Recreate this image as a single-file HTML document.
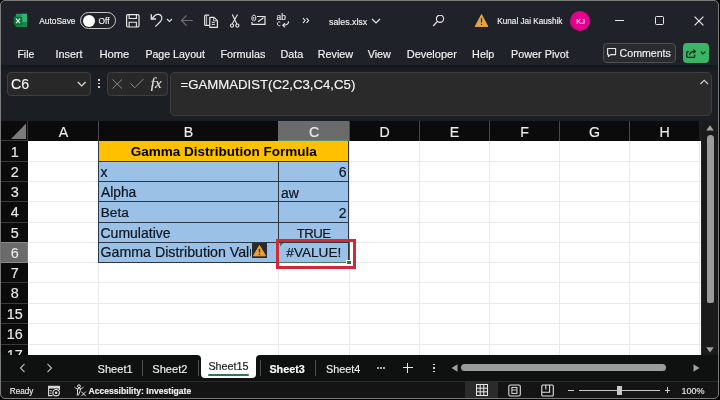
<!DOCTYPE html><html><head><meta charset="utf-8"><style>html,body{margin:0;padding:0;width:720px;height:400px;overflow:hidden;background:#000}</style></head><body><div style="position:absolute;left:0;top:0;width:720px;height:400px;will-change:transform"><div style="position:absolute;left:0px;top:0px;width:720px;height:400px;background:#000"></div>
<div style="position:absolute;left:0px;top:0px;width:719px;height:399px;background:#1f2229"></div>
<div style="position:absolute;left:1px;top:65px;width:717px;height:56px;background:#1b1e22"></div>
<div style="position:absolute;left:1px;top:65px;width:717px;height:6px;background:linear-gradient(#14171c,#1b1e21)"></div>
<svg style="position:absolute;left:13px;top:13px;" width="15" height="15" viewBox="0 0 15 15">
<rect x="2.75" y="0.75" width="11.25" height="13.25" rx="1" fill="#1d9a5c"/>
<rect x="8.8" y="0.75" width="5.2" height="13.25" fill="#2fb474"/>
<rect x="2.75" y="9" width="11.25" height="5" fill="#137a45" opacity="0.8"/>
<rect x="0.75" y="3.75" width="8.5" height="8.25" rx="0.8" fill="#0f7038"/>
<path d="M3 5.7 L7 10.1 M7 5.7 L3 10.1" stroke="#e8f5ec" stroke-width="1.1"/>
</svg>
<div style="position:absolute;left:39.2px;top:16.89px;line-height:8.4px;font-size:8.4px;font-family:'Liberation Sans', sans-serif;font-weight:400;color:#f0f0f0;white-space:pre;-webkit-text-stroke-width:0.15px;">AutoSave</div>
<div style="position:absolute;left:80.3px;top:12.2px;width:36px;height:17px;border:1.2px solid #c8c8c8;border-radius:9px;box-sizing:border-box"></div>
<div style="position:absolute;left:83px;top:14.6px;width:12px;height:12px;background:#fff;border-radius:50%"></div>
<div style="position:absolute;left:98.6px;top:16.97px;line-height:8.3px;font-size:8.3px;font-family:'Liberation Sans', sans-serif;font-weight:400;color:#f0f0f0;white-space:pre;-webkit-text-stroke-width:0.15px;">Off</div>
<svg style="position:absolute;left:125px;top:13px;" width="16" height="16" viewBox="0 0 16 16">
<rect x="1.6" y="1.6" width="12.4" height="12.4" rx="1.2" fill="none" stroke="#e8e8e8" stroke-width="1.2"/>
<path d="M4.1 1.6 V5.5 H11.4 V1.6" fill="none" stroke="#e8e8e8" stroke-width="1.1"/>
<path d="M4.1 14 V9.2 H11.4 V14" fill="none" stroke="#e8e8e8" stroke-width="1.1"/>
</svg>
<svg style="position:absolute;left:148px;top:12px;" width="16" height="17" viewBox="0 0 16 17">
<path d="M3.3 2.3 V7 H8" fill="none" stroke="#e8e8e8" stroke-width="1.3"/>
<path d="M3.5 7 L7 3.5 C9 1.8 12.5 2 13.7 4.8 C14.5 7 13.5 8.5 12.5 9.5 L7.3 14.7" fill="none" stroke="#e8e8e8" stroke-width="1.2"/>
</svg>
<svg style="position:absolute;left:166px;top:18px;" width="7" height="5" viewBox="0 0 7 5"><path d="M1 1 L3.5 3.5 L6 1" fill="none" stroke="#e0e0e0" stroke-width="1.1"/></svg>
<svg style="position:absolute;left:180px;top:14px;" width="14" height="13" viewBox="0 0 14 13"><path d="M13 6.5 H1.5 M6.5 1.5 L1.5 6.5 L6.5 11.5" fill="none" stroke="#6e6e6e" stroke-width="1.2"/></svg>
<svg style="position:absolute;left:203px;top:14px;" width="16" height="14" viewBox="0 0 16 14">
<path d="M6.2 1.2 H2.6 Q1.7 1.2 1.7 2.1 V10.4 Q1.7 11.3 2.6 11.3 H6.2" fill="none" stroke="#e8e8e8" stroke-width="1.2"/>
<path d="M3.6 1.8 V10.8" stroke="#e8e8e8" stroke-width="0.8"/>
<path d="M6.8 3.4 H11 L14.4 6.6 V13.3 H6.8 Z" fill="#202228" stroke="#e8e8e8" stroke-width="1.2" stroke-linejoin="round"/>
<path d="M10.6 3.6 V6.8 H14" fill="none" stroke="#e8e8e8" stroke-width="0.8"/>
<path d="M8.8 8.3 H11.8 M8.8 10.4 H11.8" stroke="#e8e8e8" stroke-width="1"/>
</svg>
<svg style="position:absolute;left:229px;top:14px;" width="11" height="14" viewBox="0 0 11 14">
<path d="M3.3 0.4 L7.8 10 M8.5 0.4 L3.2 10" fill="none" stroke="#e8e8e8" stroke-width="1.1"/>
<circle cx="3" cy="11.6" r="1.6" fill="none" stroke="#e8e8e8" stroke-width="1.1"/>
<circle cx="8.4" cy="11.6" r="1.6" fill="none" stroke="#e8e8e8" stroke-width="1.1"/>
</svg>
<svg style="position:absolute;left:250px;top:14px;" width="16" height="12" viewBox="0 0 16 12">
<path d="M2 8 V10.4 H15 V2.5 H7" fill="none" stroke="#e8e8e8" stroke-width="1.2"/>
<path d="M8 7.8 L13.5 3.8" fill="none" stroke="#e8e8e8" stroke-width="1.1"/>
<path d="M3.2 7 C1.8 6.5 1.6 4.5 2.2 2.5 C2.8 0.6 5.2 0.6 5.6 2.5 C6 4.5 5.6 6.8 4.6 6.8 C3.6 6.8 3.6 5 3.8 3" fill="none" stroke="#e8e8e8" stroke-width="1"/>
</svg>
<div style="position:absolute;left:276.6px;top:13.19px;line-height:8.4px;font-size:8.4px;font-family:'Liberation Sans', sans-serif;font-weight:400;color:#e8e8e8;white-space:pre;-webkit-text-stroke-width:0.15px;">ab</div>
<svg style="position:absolute;left:276px;top:20px;" width="15" height="9" viewBox="0 0 15 9">
<path d="M4.3 2.2 C3 1.4 1.4 2 1.4 3.8 C1.4 5.6 3 6.2 4.3 5.4" fill="none" stroke="#e8e8e8" stroke-width="1"/>
<path d="M12.5 1.2 C12.8 3.5 11 5.3 7 5.3 M9 3.2 L6.8 5.3 L9 7.4" fill="none" stroke="#e8e8e8" stroke-width="1.1"/>
</svg>
<svg style="position:absolute;left:302px;top:17px;" width="8" height="7" viewBox="0 0 8 7"><path d="M1 1 L3 3.5 L1 6 M4.5 1 L6.5 3.5 L4.5 6" fill="none" stroke="#e8e8e8" stroke-width="1.2"/></svg>
<div style="position:absolute;left:329px;top:18.15px;line-height:8.8px;font-size:8.8px;font-family:'Liberation Sans', sans-serif;font-weight:400;color:#f0f0f0;white-space:pre;-webkit-text-stroke-width:0.15px;">sales.xlsx</div>
<svg style="position:absolute;left:371px;top:18px;" width="10" height="6" viewBox="0 0 10 6"><path d="M1 1 L5 5 L9 1" fill="none" stroke="#e8e8e8" stroke-width="1.2"/></svg>
<svg style="position:absolute;left:432px;top:15px;" width="14" height="14" viewBox="0 0 14 14">
<circle cx="8" cy="3.8" r="3.6" fill="none" stroke="#e8e8e8" stroke-width="1.1"/>
<path d="M5.4 6.4 L1.2 11" stroke="#e8e8e8" stroke-width="1.2"/>
</svg>
<svg style="position:absolute;left:474px;top:13px;" width="16" height="15" viewBox="0 0 16 15">
<path d="M7.5 1.6 L13.8 13.4 H1.2 Z" fill="#e3a548" stroke="#e3a548" stroke-width="1" stroke-linejoin="round"/>
<path d="M7.5 5.2 V9.6" stroke="#2a2016" stroke-width="1.2"/>
<circle cx="7.5" cy="11.4" r="0.7" fill="#2a2016"/>
</svg>
<div style="position:absolute;left:497.3px;top:18.26px;line-height:8.2px;font-size:8.2px;font-family:'Liberation Sans', sans-serif;font-weight:400;color:#f0f0f0;white-space:pre;-webkit-text-stroke-width:0.15px;">Kunal Jai Kaushik</div>
<div style="position:absolute;left:570px;top:10.7px;width:20px;height:20px;background:#e3008c;border-radius:50%"></div>
<div style="position:absolute;left:380.6px;width:400px;text-align:center;top:18.34px;line-height:7.4px;font-size:7.4px;font-family:'Liberation Sans', sans-serif;font-weight:400;color:#fbd9f0;white-space:pre;-webkit-text-stroke-width:0.15px;">KJ</div>
<div style="position:absolute;left:615.3px;top:20px;width:9px;height:1.2px;background:#e8e8e8"></div>
<div style="position:absolute;left:654.7px;top:16.3px;width:9px;height:8.7px;border:1.2px solid #e8e8e8;border-radius:1.5px;box-sizing:border-box"></div>
<svg style="position:absolute;left:694px;top:16px;" width="10" height="10" viewBox="0 0 10 10"><path d="M0.6 0.6 L9.4 9.4 M9.4 0.6 L0.6 9.4" stroke="#e8e8e8" stroke-width="1.2"/></svg>
<div style="position:absolute;left:17.5px;top:49.60px;line-height:10.4px;font-size:10.4px;font-family:'Liberation Sans', sans-serif;font-weight:400;color:#f4f4f4;white-space:pre;-webkit-text-stroke:0.15px #f4f4f4;">File</div>
<div style="position:absolute;left:55.6px;top:49.26px;line-height:10.8px;font-size:10.8px;font-family:'Liberation Sans', sans-serif;font-weight:400;color:#f4f4f4;white-space:pre;-webkit-text-stroke:0.15px #f4f4f4;">Insert</div>
<div style="position:absolute;left:99.4px;top:48.92px;line-height:11.2px;font-size:11.2px;font-family:'Liberation Sans', sans-serif;font-weight:400;color:#f4f4f4;white-space:pre;-webkit-text-stroke:0.15px #f4f4f4;">Home</div>
<div style="position:absolute;left:145.4px;top:49.43px;line-height:10.6px;font-size:10.6px;font-family:'Liberation Sans', sans-serif;font-weight:400;color:#f4f4f4;white-space:pre;-webkit-text-stroke:0.15px #f4f4f4;">Page Layout</div>
<div style="position:absolute;left:220.4px;top:49.26px;line-height:10.8px;font-size:10.8px;font-family:'Liberation Sans', sans-serif;font-weight:400;color:#f4f4f4;white-space:pre;-webkit-text-stroke:0.15px #f4f4f4;">Formulas</div>
<div style="position:absolute;left:280.4px;top:49.26px;line-height:10.8px;font-size:10.8px;font-family:'Liberation Sans', sans-serif;font-weight:400;color:#f4f4f4;white-space:pre;-webkit-text-stroke:0.15px #f4f4f4;">Data</div>
<div style="position:absolute;left:317.7px;top:49.26px;line-height:10.8px;font-size:10.8px;font-family:'Liberation Sans', sans-serif;font-weight:400;color:#f4f4f4;white-space:pre;-webkit-text-stroke:0.15px #f4f4f4;">Review</div>
<div style="position:absolute;left:367.7px;top:49.26px;line-height:10.8px;font-size:10.8px;font-family:'Liberation Sans', sans-serif;font-weight:400;color:#f4f4f4;white-space:pre;-webkit-text-stroke:0.15px #f4f4f4;">View</div>
<div style="position:absolute;left:406.7px;top:49.09px;line-height:11.0px;font-size:11.0px;font-family:'Liberation Sans', sans-serif;font-weight:400;color:#f4f4f4;white-space:pre;-webkit-text-stroke:0.15px #f4f4f4;">Developer</div>
<div style="position:absolute;left:472.1px;top:49.26px;line-height:10.8px;font-size:10.8px;font-family:'Liberation Sans', sans-serif;font-weight:400;color:#f4f4f4;white-space:pre;-webkit-text-stroke:0.15px #f4f4f4;">Help</div>
<div style="position:absolute;left:511.1px;top:49.26px;line-height:10.8px;font-size:10.8px;font-family:'Liberation Sans', sans-serif;font-weight:400;color:#f4f4f4;white-space:pre;-webkit-text-stroke:0.15px #f4f4f4;">Power Pivot</div>
<div style="position:absolute;left:603.3px;top:42.7px;width:72.5px;height:20px;border:1px solid #505050;background:#2a2b2e;border-radius:4px;box-sizing:border-box"></div>
<svg style="position:absolute;left:606px;top:47px;" width="11" height="11" viewBox="0 0 11 11"><path d="M1.6 1.5 H9.6 V7.6 H4.6 L2.4 9.6 V7.6 H1.6 Z" fill="none" stroke="#e8e8e8" stroke-width="1.1" stroke-linejoin="round"/></svg>
<div style="position:absolute;left:619.6px;top:47.83px;line-height:10.6px;font-size:10.6px;font-family:'Liberation Sans', sans-serif;font-weight:400;color:#f2f2f2;white-space:pre;-webkit-text-stroke-width:0.15px;">Comments</div>
<div style="position:absolute;left:682.8px;top:43px;width:26px;height:19.7px;background:#3bb466;border-radius:4px"></div>
<svg style="position:absolute;left:685px;top:47px;" width="12" height="12" viewBox="0 0 12 12">
<path d="M4 4.6 H2.8 Q1.8 4.6 1.8 5.6 V9.6 Q1.8 10.4 2.6 10.4 H8.9 Q9.7 10.4 9.7 9.6 V7.4" fill="none" stroke="#0f2a18" stroke-width="1.2"/>
<path d="M4.4 8.2 C4.8 5.8 6.6 4.4 9.6 4.4 M8.2 2.5 L10.4 4.4 L8.2 6.3" fill="none" stroke="#0f2a18" stroke-width="1.2" stroke-linejoin="round"/>
</svg>
<svg style="position:absolute;left:700px;top:51px;" width="6" height="4" viewBox="0 0 6 4"><path d="M0.7 0.7 L3 3 L5.3 0.7" fill="none" stroke="#0f2a18" stroke-width="1.2"/></svg>
<div style="position:absolute;left:7px;top:72px;width:84px;height:24px;border:1px solid #3f3f42;background:#282828;border-radius:4px;box-sizing:border-box"></div>
<div style="position:absolute;left:11px;top:76.68px;line-height:14.2px;font-size:14.2px;font-family:'Liberation Sans', sans-serif;font-weight:400;color:#f5f5f5;white-space:pre;-webkit-text-stroke-width:0.15px;">C6</div>
<svg style="position:absolute;left:77px;top:81px;" width="10" height="7" viewBox="0 0 10 7"><path d="M0.8 1 L4.7 5 L8.6 1" fill="none" stroke="#dcdcdc" stroke-width="1.2"/></svg>
<div style="position:absolute;left:98px;top:79.0px;width:1.8px;height:1.8px;background:#d8d8d8"></div>
<div style="position:absolute;left:98px;top:82.5px;width:1.8px;height:1.8px;background:#d8d8d8"></div>
<div style="position:absolute;left:98px;top:86.0px;width:1.8px;height:1.8px;background:#d8d8d8"></div>
<div style="position:absolute;left:107px;top:72px;width:60.5px;height:24px;border:1px solid #3f3f42;background:#282828;border-radius:4px;box-sizing:border-box"></div>
<svg style="position:absolute;left:112px;top:79px;" width="11" height="10" viewBox="0 0 11 10"><path d="M0.5 0.5 L10 9.5 M10 0.5 L0.5 9.5" stroke="#8c8c8c" stroke-width="1"/></svg>
<svg style="position:absolute;left:130px;top:78px;" width="14" height="11" viewBox="0 0 14 11"><path d="M0.5 5.5 L4.8 9.8 L13.5 1" fill="none" stroke="#8c8c8c" stroke-width="1"/></svg>
<div style="position:absolute;left:150.8px;top:75.90px;line-height:15px;font-size:15px;font-family:'Liberation Serif', serif;font-weight:400;color:#e0e0e0;white-space:pre;-webkit-text-stroke-width:0.15px;font-style:italic;">fx</div>
<div style="position:absolute;left:170px;top:72px;width:541.5px;height:44px;border:1px solid #3f3f42;background:#2a2a2a;border-radius:5px;box-sizing:border-box"></div>
<div style="position:absolute;left:180.5px;top:78.23px;line-height:13.2px;font-size:13.2px;font-family:'Liberation Sans', sans-serif;font-weight:400;color:#f5f5f5;white-space:pre;-webkit-text-stroke-width:0.15px;">=GAMMADIST(C2,C3,C4,C5)</div>
<svg style="position:absolute;left:699px;top:79px;" width="11" height="7" viewBox="0 0 11 7"><path d="M1.4 5 L5.2 1.3 L9 5" fill="none" stroke="#d0d0d0" stroke-width="1.1"/></svg>
<div style="position:absolute;left:1px;top:121px;width:701px;height:20px;background:#0b0b0b"></div>
<div style="position:absolute;left:1px;top:141px;width:27px;height:214px;background:#0b0b0b"></div>
<div style="position:absolute;left:28px;top:141px;width:673px;height:214px;background:#fff"></div>
<svg style="position:absolute;left:10px;top:122px;" width="18" height="18" viewBox="0 0 18 18"><path d="M16 1.5 V17 H1 Z" fill="#7a7a7a"/></svg>
<div style="position:absolute;left:1px;top:140px;width:27px;height:1px;background:#3a3a3a"></div>
<div style="position:absolute;left:27px;top:121px;width:1px;height:20px;background:#3a3a3a"></div>
<div style="position:absolute;left:98px;top:121px;width:1px;height:20px;background:#4a4a4a"></div>
<div style="position:absolute;left:-136.5px;width:400px;text-align:center;top:124.98px;line-height:14.2px;font-size:14.2px;font-family:'Liberation Sans', sans-serif;font-weight:400;color:#ececec;white-space:pre;-webkit-text-stroke-width:0.15px;">A</div>
<div style="position:absolute;left:278px;top:121px;width:1px;height:20px;background:#4a4a4a"></div>
<div style="position:absolute;left:-11.5px;width:400px;text-align:center;top:124.98px;line-height:14.2px;font-size:14.2px;font-family:'Liberation Sans', sans-serif;font-weight:400;color:#ececec;white-space:pre;-webkit-text-stroke-width:0.15px;">B</div>
<div style="position:absolute;left:278px;top:121px;width:71px;height:20px;background:#6b6b6b"></div>
<div style="position:absolute;left:278px;top:140px;width:71px;height:1px;background:#5e8f66"></div>
<div style="position:absolute;left:349px;top:121px;width:1px;height:20px;background:#4a4a4a"></div>
<div style="position:absolute;left:114.0px;width:400px;text-align:center;top:124.98px;line-height:14.2px;font-size:14.2px;font-family:'Liberation Sans', sans-serif;font-weight:400;color:#ececec;white-space:pre;-webkit-text-stroke-width:0.15px;">C</div>
<div style="position:absolute;left:419px;top:121px;width:1px;height:20px;background:#4a4a4a"></div>
<div style="position:absolute;left:184.5px;width:400px;text-align:center;top:124.98px;line-height:14.2px;font-size:14.2px;font-family:'Liberation Sans', sans-serif;font-weight:400;color:#ececec;white-space:pre;-webkit-text-stroke-width:0.15px;">D</div>
<div style="position:absolute;left:489px;top:121px;width:1px;height:20px;background:#4a4a4a"></div>
<div style="position:absolute;left:254.5px;width:400px;text-align:center;top:124.98px;line-height:14.2px;font-size:14.2px;font-family:'Liberation Sans', sans-serif;font-weight:400;color:#ececec;white-space:pre;-webkit-text-stroke-width:0.15px;">E</div>
<div style="position:absolute;left:559px;top:121px;width:1px;height:20px;background:#4a4a4a"></div>
<div style="position:absolute;left:324.5px;width:400px;text-align:center;top:124.98px;line-height:14.2px;font-size:14.2px;font-family:'Liberation Sans', sans-serif;font-weight:400;color:#ececec;white-space:pre;-webkit-text-stroke-width:0.15px;">F</div>
<div style="position:absolute;left:629px;top:121px;width:1px;height:20px;background:#4a4a4a"></div>
<div style="position:absolute;left:394.5px;width:400px;text-align:center;top:124.98px;line-height:14.2px;font-size:14.2px;font-family:'Liberation Sans', sans-serif;font-weight:400;color:#ececec;white-space:pre;-webkit-text-stroke-width:0.15px;">G</div>
<div style="position:absolute;left:699px;top:121px;width:1px;height:20px;background:#4a4a4a"></div>
<div style="position:absolute;left:464.5px;width:400px;text-align:center;top:124.98px;line-height:14.2px;font-size:14.2px;font-family:'Liberation Sans', sans-serif;font-weight:400;color:#ececec;white-space:pre;-webkit-text-stroke-width:0.15px;">H</div>
<div style="position:absolute;left:98px;top:141px;width:1px;height:214px;background:#e9e9e9"></div>
<div style="position:absolute;left:278px;top:141px;width:1px;height:214px;background:#e9e9e9"></div>
<div style="position:absolute;left:349px;top:141px;width:1px;height:214px;background:#e9e9e9"></div>
<div style="position:absolute;left:419px;top:141px;width:1px;height:214px;background:#e9e9e9"></div>
<div style="position:absolute;left:489px;top:141px;width:1px;height:214px;background:#e9e9e9"></div>
<div style="position:absolute;left:559px;top:141px;width:1px;height:214px;background:#e9e9e9"></div>
<div style="position:absolute;left:629px;top:141px;width:1px;height:214px;background:#e9e9e9"></div>
<div style="position:absolute;left:699px;top:141px;width:1px;height:214px;background:#e9e9e9"></div>
<div style="position:absolute;left:1px;top:161px;width:27px;height:1px;background:#3a3a3a"></div>
<div style="position:absolute;left:28px;top:161px;width:673px;height:1px;background:#e9e9e9"></div>
<div style="position:absolute;left:-185.2px;width:400px;text-align:center;top:145.41px;line-height:14.4px;font-size:14.4px;font-family:'Liberation Sans', sans-serif;font-weight:400;color:#e8e8e8;white-space:pre;-webkit-text-stroke-width:0.15px;">1</div>
<div style="position:absolute;left:1px;top:181px;width:27px;height:1px;background:#3a3a3a"></div>
<div style="position:absolute;left:28px;top:181px;width:673px;height:1px;background:#e9e9e9"></div>
<div style="position:absolute;left:-185.2px;width:400px;text-align:center;top:165.41px;line-height:14.4px;font-size:14.4px;font-family:'Liberation Sans', sans-serif;font-weight:400;color:#e8e8e8;white-space:pre;-webkit-text-stroke-width:0.15px;">2</div>
<div style="position:absolute;left:1px;top:201px;width:27px;height:1px;background:#3a3a3a"></div>
<div style="position:absolute;left:28px;top:201px;width:673px;height:1px;background:#e9e9e9"></div>
<div style="position:absolute;left:-185.2px;width:400px;text-align:center;top:185.41px;line-height:14.4px;font-size:14.4px;font-family:'Liberation Sans', sans-serif;font-weight:400;color:#e8e8e8;white-space:pre;-webkit-text-stroke-width:0.15px;">3</div>
<div style="position:absolute;left:1px;top:222px;width:27px;height:1px;background:#3a3a3a"></div>
<div style="position:absolute;left:28px;top:222px;width:673px;height:1px;background:#e9e9e9"></div>
<div style="position:absolute;left:-185.2px;width:400px;text-align:center;top:205.41px;line-height:14.4px;font-size:14.4px;font-family:'Liberation Sans', sans-serif;font-weight:400;color:#e8e8e8;white-space:pre;-webkit-text-stroke-width:0.15px;">4</div>
<div style="position:absolute;left:1px;top:242px;width:27px;height:1px;background:#3a3a3a"></div>
<div style="position:absolute;left:28px;top:242px;width:673px;height:1px;background:#e9e9e9"></div>
<div style="position:absolute;left:-185.2px;width:400px;text-align:center;top:226.41px;line-height:14.4px;font-size:14.4px;font-family:'Liberation Sans', sans-serif;font-weight:400;color:#e8e8e8;white-space:pre;-webkit-text-stroke-width:0.15px;">5</div>
<div style="position:absolute;left:1px;top:262px;width:27px;height:1px;background:#3a3a3a"></div>
<div style="position:absolute;left:28px;top:262px;width:673px;height:1px;background:#e9e9e9"></div>
<div style="position:absolute;left:1px;top:242px;width:27px;height:21px;background:#6b6b6b"></div>
<div style="position:absolute;left:1px;top:242px;width:27px;height:1px;background:#8a8a8a"></div>
<div style="position:absolute;left:1px;top:262px;width:27px;height:1px;background:#8a8a8a"></div>
<div style="position:absolute;left:27px;top:242px;width:1px;height:21px;background:#5e8f66"></div>
<div style="position:absolute;left:-185.2px;width:400px;text-align:center;top:246.41px;line-height:14.4px;font-size:14.4px;font-family:'Liberation Sans', sans-serif;font-weight:400;color:#e8e8e8;white-space:pre;-webkit-text-stroke-width:0.15px;">6</div>
<div style="position:absolute;left:1px;top:282px;width:27px;height:1px;background:#3a3a3a"></div>
<div style="position:absolute;left:28px;top:282px;width:673px;height:1px;background:#e9e9e9"></div>
<div style="position:absolute;left:-185.2px;width:400px;text-align:center;top:266.41px;line-height:14.4px;font-size:14.4px;font-family:'Liberation Sans', sans-serif;font-weight:400;color:#e8e8e8;white-space:pre;-webkit-text-stroke-width:0.15px;">7</div>
<div style="position:absolute;left:1px;top:303px;width:27px;height:1px;background:#3a3a3a"></div>
<div style="position:absolute;left:28px;top:303px;width:673px;height:1px;background:#e9e9e9"></div>
<div style="position:absolute;left:-185.2px;width:400px;text-align:center;top:286.41px;line-height:14.4px;font-size:14.4px;font-family:'Liberation Sans', sans-serif;font-weight:400;color:#e8e8e8;white-space:pre;-webkit-text-stroke-width:0.15px;">8</div>
<div style="position:absolute;left:1px;top:323px;width:27px;height:1px;background:#3a3a3a"></div>
<div style="position:absolute;left:28px;top:323px;width:673px;height:1px;background:#e9e9e9"></div>
<div style="position:absolute;left:-185.2px;width:400px;text-align:center;top:307.41px;line-height:14.4px;font-size:14.4px;font-family:'Liberation Sans', sans-serif;font-weight:400;color:#e8e8e8;white-space:pre;-webkit-text-stroke-width:0.15px;">15</div>
<div style="position:absolute;left:1px;top:344px;width:27px;height:1px;background:#3a3a3a"></div>
<div style="position:absolute;left:28px;top:344px;width:673px;height:1px;background:#e9e9e9"></div>
<div style="position:absolute;left:-185.2px;width:400px;text-align:center;top:327.41px;line-height:14.4px;font-size:14.4px;font-family:'Liberation Sans', sans-serif;font-weight:400;color:#e8e8e8;white-space:pre;-webkit-text-stroke-width:0.15px;">16</div>
<div style="position:absolute;left:1px;top:364px;width:27px;height:1px;background:#3a3a3a"></div>
<div style="position:absolute;left:28px;top:364px;width:673px;height:1px;background:#e9e9e9"></div>
<div style="position:absolute;left:-185.2px;width:400px;text-align:center;top:348.41px;line-height:14.4px;font-size:14.4px;font-family:'Liberation Sans', sans-serif;font-weight:400;color:#e8e8e8;white-space:pre;-webkit-text-stroke-width:0.15px;">17</div>
<div style="position:absolute;left:98px;top:141px;width:251px;height:21px;background:#ffc000"></div>
<div style="position:absolute;left:98px;top:161px;width:251px;height:101px;background:#9bc2e6"></div>
<div style="position:absolute;left:98px;top:161px;width:251px;height:1px;background:#2a3748"></div>
<div style="position:absolute;left:98px;top:181px;width:251px;height:1px;background:#2a3748"></div>
<div style="position:absolute;left:98px;top:201px;width:251px;height:1px;background:#2a3748"></div>
<div style="position:absolute;left:98px;top:222px;width:251px;height:1px;background:#2a3748"></div>
<div style="position:absolute;left:98px;top:242px;width:251px;height:1px;background:#2a3748"></div>
<div style="position:absolute;left:98px;top:262px;width:251px;height:1px;background:#2a3748"></div>
<div style="position:absolute;left:98px;top:141px;width:1px;height:121px;background:#2a3748"></div>
<div style="position:absolute;left:278px;top:161px;width:1px;height:101px;background:#2a3748"></div>
<div style="position:absolute;left:348px;top:141px;width:1px;height:121px;background:#2a3748"></div>
<div style="position:absolute;left:23.80000000000001px;width:400px;text-align:center;top:145.17px;line-height:13.5px;font-size:13.5px;font-family:'Liberation Sans', sans-serif;font-weight:700;color:#000;white-space:pre;">Gamma Distribution Formula</div>
<div style="position:absolute;left:100.5px;top:165.05px;line-height:14px;font-size:14px;font-family:'Liberation Sans', sans-serif;font-weight:400;color:#000;white-space:pre;-webkit-text-stroke:0.2px #0d1520;color:#0d1520;">x</div>
<div style="position:absolute;left:101px;top:185.72px;line-height:13.8px;font-size:13.8px;font-family:'Liberation Sans', sans-serif;font-weight:400;color:#000;white-space:pre;-webkit-text-stroke:0.2px #0d1520;color:#0d1520;">Alpha</div>
<div style="position:absolute;left:100.8px;top:205.89px;line-height:13.6px;font-size:13.6px;font-family:'Liberation Sans', sans-serif;font-weight:400;color:#000;white-space:pre;-webkit-text-stroke:0.2px #0d1520;color:#0d1520;">Beta</div>
<div style="position:absolute;left:100.5px;top:225.85px;line-height:14.0px;font-size:14.0px;font-family:'Liberation Sans', sans-serif;font-weight:400;color:#000;white-space:pre;-webkit-text-stroke:0.2px #0d1520;color:#0d1520;">Cumulative</div>
<div style="position:absolute;left:99px;top:243px;width:152px;height:19px;overflow:hidden">
<div style="position:absolute;left:1.5px;top:2.38px;line-height:14.2px;font-size:14.2px;font-family:'Liberation Sans', sans-serif;font-weight:400;color:#000;white-space:pre;-webkit-text-stroke:0.2px #0d1520;color:#0d1520;">Gamma Distribution Value</div>
</div>
<div style="position:absolute;left:-53.5px;width:400px;text-align:right;top:165.05px;line-height:14px;font-size:14px;font-family:'Liberation Sans', sans-serif;font-weight:400;color:#000;white-space:pre;-webkit-text-stroke:0.2px #0d1520;color:#0d1520;">6</div>
<div style="position:absolute;left:281px;top:185.55px;line-height:14px;font-size:14px;font-family:'Liberation Sans', sans-serif;font-weight:400;color:#000;white-space:pre;-webkit-text-stroke:0.2px #0d1520;color:#0d1520;">aw</div>
<div style="position:absolute;left:-53.5px;width:400px;text-align:right;top:205.55px;line-height:14px;font-size:14px;font-family:'Liberation Sans', sans-serif;font-weight:400;color:#000;white-space:pre;-webkit-text-stroke:0.2px #0d1520;color:#0d1520;">2</div>
<div style="position:absolute;left:113.60000000000002px;width:400px;text-align:center;top:227.13px;line-height:13.2px;font-size:13.2px;font-family:'Liberation Sans', sans-serif;font-weight:400;color:#000;white-space:pre;letter-spacing:-0.6px;-webkit-text-stroke:0.2px #0d1520;color:#0d1520;">TRUE</div>
<div style="position:absolute;left:251.6px;top:242.8px;width:15.7px;height:15.5px;background:#2b2b2b"></div>
<svg style="position:absolute;left:252px;top:244px;" width="15" height="13" viewBox="0 0 15 13">
<path d="M7.5 1.5 L13.5 11.8 H1.5 Z" fill="#e9a23b" stroke="#e9a23b" stroke-width="1" stroke-linejoin="round"/>
<path d="M7.5 4.8 V8.5" stroke="#2b2b2b" stroke-width="1.3"/>
<circle cx="7.5" cy="10.2" r="0.75" fill="#2b2b2b"/>
</svg>
<div style="position:absolute;left:279px;top:262px;width:71px;height:1px;background:#4d7a55"></div>
<div style="position:absolute;left:348.5px;top:242px;width:1.2px;height:21px;background:#3d6e48"></div>
<div style="position:absolute;left:347px;top:260.8px;width:4px;height:3.6px;background:#217346;outline:0.6px solid #fff"></div>
<svg style="position:absolute;left:280px;top:243px;" width="4" height="4" viewBox="0 0 4 4"><path d="M0 0 H3.5 L0 3.5 Z" fill="#1e8b3e"/></svg>
<div style="position:absolute;left:113.80000000000001px;width:400px;text-align:center;top:246.19px;line-height:13.6px;font-size:13.6px;font-family:'Liberation Sans', sans-serif;font-weight:400;color:#000;white-space:pre;-webkit-text-stroke:0.2px #0d1520;color:#0d1520;">#VALUE!</div>
<div style="position:absolute;left:276.2px;top:238.7px;width:80.2px;height:30.5px;border:3px solid #cf2a36;border-top-width:3.5px;box-sizing:border-box"></div>
<div style="position:absolute;left:702px;top:121px;width:16px;height:234px;background:#1a1a1a"></div>
<div style="position:absolute;left:699px;top:121px;width:3px;height:20px;background:#1e1e1e"></div>
<svg style="position:absolute;left:706px;top:125px;" width="8" height="6" viewBox="0 0 8 6"><path d="M4 0.3 L7.8 5.6 H0.2 Z" fill="#a0a0a0"/></svg>
<div style="position:absolute;left:707px;top:135px;width:7px;height:168px;background:#9b9b9b;border-radius:3.5px 3.5px 2px 2px"></div>
<svg style="position:absolute;left:706px;top:347px;" width="8" height="6" viewBox="0 0 8 6"><path d="M0.2 0.3 H7.8 L4 5.6 Z" fill="#a0a0a0"/></svg>
<div style="position:absolute;left:1px;top:355px;width:717px;height:26px;background:#0e110f"></div>
<div style="position:absolute;left:201.4px;top:350px;width:54.4px;height:27.8px;background:#fff;border-radius:0 0 4px 4px"></div>
<div style="position:absolute;left:197.4px;top:355px;width:4px;height:4px;background:#fff"></div>
<div style="position:absolute;left:197.4px;top:355px;width:4px;height:4px;background:#0e110f;border-top-right-radius:4px"></div>
<div style="position:absolute;left:255.8px;top:355px;width:4px;height:4px;background:#fff"></div>
<div style="position:absolute;left:255.8px;top:355px;width:4px;height:4px;background:#0e110f;border-top-left-radius:4px"></div>
<svg style="position:absolute;left:19px;top:363px;" width="7" height="10" viewBox="0 0 7 10"><path d="M5.5 0.8 L1.5 5 L5.5 9.2" fill="none" stroke="#bdbdbd" stroke-width="1.1"/></svg>
<svg style="position:absolute;left:45.5px;top:363px;" width="7" height="10" viewBox="0 0 7 10"><path d="M1.5 0.8 L5.5 5 L1.5 9.2" fill="none" stroke="#bdbdbd" stroke-width="1.1"/></svg>
<div style="position:absolute;left:97.5px;top:364.10px;line-height:11.1px;font-size:11.1px;font-family:'Liberation Sans', sans-serif;font-weight:400;color:#efefef;white-space:pre;-webkit-text-stroke-width:0.15px;">Sheet1</div>
<div style="position:absolute;left:142px;top:360px;width:1px;height:16px;background:#505050"></div>
<div style="position:absolute;left:152.3px;top:364.10px;line-height:11.1px;font-size:11.1px;font-family:'Liberation Sans', sans-serif;font-weight:400;color:#efefef;white-space:pre;-webkit-text-stroke-width:0.15px;">Sheet2</div>
<div style="position:absolute;left:198px;top:360px;width:1px;height:16px;background:#505050"></div>
<div style="position:absolute;left:208.4px;top:360.76px;line-height:10.8px;font-size:10.8px;font-family:'Liberation Sans', sans-serif;font-weight:400;color:#1e1e1e;white-space:pre;-webkit-text-stroke:0.2px #1e1e1e;">Sheet15</div>
<div style="position:absolute;left:208.3px;top:374px;width:40.3px;height:2px;background:#2b7a4f;border-radius:1px"></div>
<div style="position:absolute;left:260px;top:360px;width:1px;height:16px;background:#505050"></div>
<div style="position:absolute;left:269.4px;top:364.16px;line-height:10.8px;font-size:10.8px;font-family:'Liberation Sans', sans-serif;font-weight:700;color:#fff;white-space:pre;-webkit-text-stroke-width:0.15px;">Sheet3</div>
<div style="position:absolute;left:314.7px;top:360px;width:1px;height:16px;background:#505050"></div>
<div style="position:absolute;left:326px;top:364.36px;line-height:10.8px;font-size:10.8px;font-family:'Liberation Sans', sans-serif;font-weight:400;color:#efefef;white-space:pre;-webkit-text-stroke-width:0.15px;">Sheet4</div>
<div style="position:absolute;left:377.0px;top:367px;width:2px;height:2px;background:#e0e0e0;border-radius:50%"></div>
<div style="position:absolute;left:380.2px;top:367px;width:2px;height:2px;background:#e0e0e0;border-radius:50%"></div>
<div style="position:absolute;left:383.4px;top:367px;width:2px;height:2px;background:#e0e0e0;border-radius:50%"></div>
<div style="position:absolute;left:402.5px;top:367.3px;width:10px;height:1.2px;background:#e8e8e8"></div>
<div style="position:absolute;left:406.9px;top:362.5px;width:1.2px;height:10px;background:#e8e8e8"></div>
<div style="position:absolute;left:433.2px;top:363.5px;width:1.8px;height:1.8px;background:#d8d8d8"></div>
<div style="position:absolute;left:433.2px;top:367.0px;width:1.8px;height:1.8px;background:#d8d8d8"></div>
<div style="position:absolute;left:433.2px;top:370.5px;width:1.8px;height:1.8px;background:#d8d8d8"></div>
<svg style="position:absolute;left:451px;top:364px;" width="7" height="8" viewBox="0 0 7 8"><path d="M6.5 0.2 V7.8 L0.5 4 Z" fill="#a0a0a0"/></svg>
<div style="position:absolute;left:461.4px;top:363.6px;width:204.3px;height:7.8px;background:#9b9b9b;border-radius:4px"></div>
<svg style="position:absolute;left:692.5px;top:364px;" width="7" height="8" viewBox="0 0 7 8"><path d="M0.5 0.2 V7.8 L6.5 4 Z" fill="#a0a0a0"/></svg>
<div style="position:absolute;left:1px;top:381px;width:717px;height:17px;background:#141414"></div>
<div style="position:absolute;left:1px;top:380.5px;width:717px;height:1px;background:#2c2c2c"></div>
<div style="position:absolute;left:9.8px;top:387.76px;line-height:8.2px;font-size:8.2px;font-family:'Liberation Sans', sans-serif;font-weight:400;color:#e6e6e6;white-space:pre;-webkit-text-stroke-width:0.15px;">Ready</div>
<svg style="position:absolute;left:47px;top:384.5px;" width="15" height="13" viewBox="0 0 15 13">
<path d="M5.5 10.6 H1.6 V1.3 H12.4 V5" fill="none" stroke="#dcdcdc" stroke-width="1.1"/>
<rect x="1.6" y="1.3" width="10.8" height="2.2" fill="#dcdcdc"/>
<path d="M2.6 5.8 H5 M2.6 8.2 H4.6" stroke="#dcdcdc" stroke-width="1"/>
<circle cx="9.1" cy="7.7" r="3.2" fill="#141414" stroke="#e6e6e6" stroke-width="1.1"/>
<circle cx="9.1" cy="7.7" r="1.3" fill="#e6e6e6"/>
</svg>
<svg style="position:absolute;left:73px;top:384px;" width="14" height="13" viewBox="0 0 14 13">
<circle cx="6" cy="2.2" r="1.4" fill="none" stroke="#e6e6e6" stroke-width="1"/>
<path d="M1.5 3.2 C3 4.5 4.2 4.8 6 4.8 C7.8 4.8 9 4.5 10.5 3.2 M4.4 5 C4.8 7 4.6 9 4.2 11.5 M7.6 5 C7.2 6.5 6.8 8.5 5.2 11.5" fill="none" stroke="#e6e6e6" stroke-width="1"/>
<path d="M8.3 7.6 L12.8 12.2 M12.8 7.6 L8.3 12.2" stroke="#e6e6e6" stroke-width="1"/>
</svg>
<div style="position:absolute;left:88.5px;top:386.62px;line-height:8.6px;font-size:8.6px;font-family:'Liberation Sans', sans-serif;font-weight:700;color:#f0f0f0;white-space:pre;-webkit-text-stroke-width:0.15px;">Accessibility: Investigate</div>
<div style="position:absolute;left:465.3px;top:381.5px;width:33px;height:16.5px;background:#2b2b2b"></div>
<svg style="position:absolute;left:475.5px;top:384px;" width="13" height="12" viewBox="0 0 13 12">
<rect x="0.5" y="0.5" width="11" height="11" fill="none" stroke="#e8e8e8" stroke-width="1"/>
<path d="M4.2 0.5 V11.5 M7.8 0.5 V11.5 M0.5 4.2 H11.5 M0.5 7.8 H11.5" stroke="#e8e8e8" stroke-width="1"/>
</svg>
<svg style="position:absolute;left:508px;top:384px;" width="14" height="13" viewBox="0 0 14 13">
<rect x="0.8" y="1" width="11.5" height="11" rx="1.5" fill="none" stroke="#e0e0e0" stroke-width="1.1"/>
<rect x="3.9" y="3.4" width="5" height="6" fill="none" stroke="#e0e0e0" stroke-width="1"/>
<path d="M3.9 6 H8.9" stroke="#e0e0e0" stroke-width="0.9"/>
</svg>
<svg style="position:absolute;left:541px;top:384px;" width="14" height="13" viewBox="0 0 14 13">
<rect x="0.8" y="1" width="11.5" height="11" rx="1" fill="none" stroke="#e0e0e0" stroke-width="1.1"/>
<path d="M8.6 1 V8.2 H0.8 M4.8 1 V5.6" fill="none" stroke="#e0e0e0" stroke-width="1.1"/>
</svg>
<div style="position:absolute;left:568.4px;top:389.6px;width:5.8px;height:1px;background:#d0d0d0"></div>
<div style="position:absolute;left:578.9px;top:389.6px;width:81px;height:1px;background:#c8c8c8"></div>
<div style="position:absolute;left:617px;top:385.8px;width:5px;height:9px;background:#c8c8c8"></div>
<div style="position:absolute;left:664.9px;top:389.6px;width:5.6px;height:1px;background:#d0d0d0"></div>
<div style="position:absolute;left:667.2px;top:387px;width:1px;height:6px;background:#d0d0d0"></div>
<div style="position:absolute;left:681.5px;top:386.68px;line-height:9.0px;font-size:9.0px;font-family:'Liberation Sans', sans-serif;font-weight:400;color:#e6e6e6;white-space:pre;-webkit-text-stroke-width:0.15px;">100%</div>
<div style="position:absolute;left:0px;top:0px;width:719px;height:399px;border:1px solid #7a7a7a;box-sizing:border-box;border-radius:5px;box-shadow:0 0 0 40px #000"></div></div></body></html>
